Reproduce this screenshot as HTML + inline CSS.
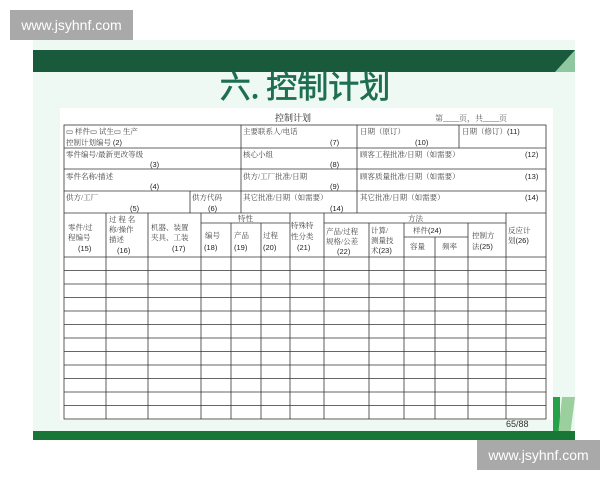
<!DOCTYPE html>
<html><head><meta charset="utf-8"><style>
body{margin:0;width:600px;height:480px;background:#fff;position:relative;overflow:hidden;font-family:"Liberation Sans","Noto Sans CJK SC",sans-serif}
.wm{position:absolute;background:#a9a9a9;color:#fff;font-size:14px;display:flex;align-items:center;justify-content:center}
.n{font-family:"Liberation Sans",sans-serif;fill:#222}
</style></head><body>
<div class="wm" style="left:10px;top:10px;width:123px;height:30px">www.jsyhnf.com</div>
<svg style="position:absolute;left:0;top:0" width="600" height="480" font-family="'Liberation Serif','Noto Serif CJK SC',serif">
<rect x="33" y="40" width="542" height="400" fill="#eef9f3"/>
<rect x="33" y="50" width="542" height="22" fill="#1a5a3c"/>
<polygon points="555,72 575,50 575,72" fill="#8fc7a0"/>
<text x="305" y="98" text-anchor="middle" font-family="'Noto Sans CJK SC',sans-serif" font-size="31" fill="#1f6e50" stroke="#1f6e50" stroke-width="0.7">六. 控制计划</text>
<rect x="60" y="108" width="493" height="312" fill="#fff"/>
<text x="275" y="121" font-size="9" fill="#222">控制计划</text>
<text x="435" y="121" font-size="8" fill="#555">第____页，共____页</text>
<g stroke="#333" stroke-width="0.8" fill="none">
<rect x="64" y="125" width="482" height="294"/>
<line x1="64" y1="148" x2="546" y2="148"/><line x1="64" y1="169" x2="546" y2="169"/>
<line x1="64" y1="191" x2="546" y2="191"/><line x1="64" y1="213" x2="546" y2="213"/>
<line x1="241" y1="125" x2="241" y2="213"/><line x1="357" y1="125" x2="357" y2="213"/>
<line x1="459" y1="125" x2="459" y2="148"/><line x1="190" y1="191" x2="190" y2="213"/>
<line x1="201" y1="223" x2="290" y2="223"/><line x1="324" y1="223" x2="506" y2="223"/>
<line x1="404" y1="237" x2="468" y2="237"/>
<line x1="106" y1="213" x2="106" y2="419"/><line x1="148" y1="213" x2="148" y2="419"/>
<line x1="201" y1="213" x2="201" y2="419"/><line x1="231" y1="223" x2="231" y2="419"/>
<line x1="261" y1="223" x2="261" y2="419"/><line x1="290" y1="213" x2="290" y2="419"/>
<line x1="324" y1="213" x2="324" y2="419"/><line x1="369" y1="223" x2="369" y2="419"/>
<line x1="404" y1="223" x2="404" y2="419"/><line x1="435" y1="237" x2="435" y2="419"/>
<line x1="468" y1="223" x2="468" y2="419"/><line x1="506" y1="213" x2="506" y2="419"/>
<line x1="64" y1="257" x2="546" y2="257"/>
<line x1="64" y1="270.5" x2="546" y2="270.5"/><line x1="64" y1="284" x2="546" y2="284"/>
<line x1="64" y1="297.5" x2="546" y2="297.5"/><line x1="64" y1="311" x2="546" y2="311"/>
<line x1="64" y1="324.5" x2="546" y2="324.5"/><line x1="64" y1="338" x2="546" y2="338"/>
<line x1="64" y1="351.5" x2="546" y2="351.5"/><line x1="64" y1="365" x2="546" y2="365"/>
<line x1="64" y1="378.5" x2="546" y2="378.5"/><line x1="64" y1="392" x2="546" y2="392"/>
<line x1="64" y1="405.5" x2="546" y2="405.5"/>
</g>
<g font-size="7.5" fill="#444">
<text x="66" y="134">▭ 样件▭ 试生▭ 生产</text><text x="66" y="145">控制计划编号 <tspan class="n">(2)</tspan></text>
<text x="243" y="134">主要联系人/电话</text><text class="n" x="330" y="145">(7)</text>
<text x="360" y="134">日期（原订）</text><text class="n" x="415" y="145">(10)</text><text x="462" y="134">日期（修订）<tspan class="n">(11)</tspan></text>
<text x="66" y="157">零件编号/最新更改等级</text><text class="n" x="150" y="167">(3)</text>
<text x="243" y="157">核心小组</text><text class="n" x="330" y="167">(8)</text>
<text x="360" y="157">顾客工程批准/日期（如需要）</text><text class="n" x="525" y="157">(12)</text>
<text x="66" y="179">零件名称/描述</text><text class="n" x="150" y="189">(4)</text>
<text x="243" y="179">供方/工厂批准/日期</text><text class="n" x="330" y="189">(9)</text>
<text x="360" y="179">顾客质量批准/日期（如需要）</text><text class="n" x="525" y="179">(13)</text>
<text x="66" y="200">供方/工厂</text><text class="n" x="130" y="211">(5)</text>
<text x="192" y="200">供方代码</text><text class="n" x="208" y="211">(6)</text>
<text x="243" y="200">其它批准/日期（如需要）</text><text class="n" x="330" y="211">(14)</text>
<text x="360" y="200">其它批准/日期（如需要）</text><text class="n" x="525" y="200">(14)</text>
<text x="68" y="230">零件/过</text><text x="68" y="240">程编号</text><text class="n" x="78" y="251">(15)</text>
<text x="109" y="222">过 程 名</text><text x="109" y="232">称/操作</text><text x="109" y="242">描述</text><text class="n" x="117" y="253">(16)</text>
<text x="151" y="230">机器、装置</text><text x="151" y="240">夹具、工装</text><text class="n" x="172" y="251">(17)</text>
<text x="238" y="221">特性</text>
<text x="205" y="238">编号</text><text class="n" x="204" y="250">(18)</text>
<text x="234" y="238">产品</text><text class="n" x="234" y="250">(19)</text>
<text x="263" y="238">过程</text><text class="n" x="263" y="250">(20)</text>
<text x="291" y="228">特殊特</text><text x="291" y="239">性分类</text><text class="n" x="297" y="250">(21)</text>
<text x="408" y="221">方法</text>
<text x="326" y="234">产品/过程</text><text x="326" y="244">规格/公差</text><text class="n" x="337" y="254">(22)</text>
<text x="371" y="233">计算/</text><text x="371" y="243">测量技</text><text x="371" y="253">术<tspan class="n">(23)</tspan></text>
<text x="413" y="233">样件<tspan class="n">(24)</tspan></text><text x="410" y="249">容量</text><text x="442" y="249">频率</text>
<text x="472" y="238">控制方</text><text x="472" y="249">法<tspan class="n">(25)</tspan></text>
<text x="508" y="233">反应计</text><text x="508" y="243">划<tspan class="n">(26)</tspan></text>
</g>
<text x="506" y="427" font-family="'Liberation Sans',sans-serif" font-size="9" fill="#333">65/88</text>
<polygon points="553,397 560,397 560,432 553,432" fill="#27a04a"/>
<polygon points="562,397 575,397 570,436 558,436" fill="#9ccf9e"/>
<rect x="33" y="431" width="542" height="9" fill="#187636"/>
</svg>
<div class="wm" style="left:477px;top:440px;width:123px;height:30px">www.jsyhnf.com</div>
</body></html>
